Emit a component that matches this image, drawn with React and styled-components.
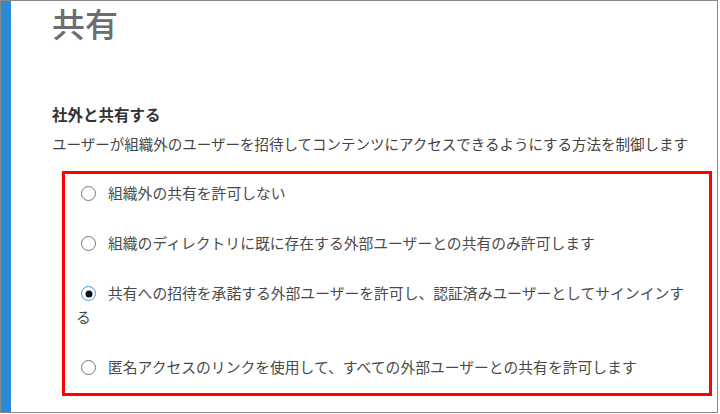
import React from "react";
import styled, { createGlobalStyle } from "styled-components";

const Global = createGlobalStyle`
  html, body { margin: 0; padding: 0; background: #ffffff; }
  body { font-family: "Noto Sans CJK JP", "Noto Sans", sans-serif; }
  * { box-sizing: border-box; }
`;

const Frame = styled.div`
  width: 718px;
  height: 413px;
  border: 1px solid #8a8a8a;
  display: flex;
  background: #fff;
`;

const Stripe = styled.div`
  width: 10px;
  flex: none;
  background: #2a8ad9;
`;

const Content = styled.main`
  flex: 1;
  padding: 0 4px 0 41px;
  display: flex;
  flex-direction: column;
`;

const Title = styled.h1`
  margin: 0;
  font-size: 33px;
  line-height: 44px;
  font-weight: 500;
  color: #6b6e70;
`;

const SectionHeading = styled.h2`
  margin: 57px 0 0;
  font-size: 15.5px;
  line-height: 24px;
  font-weight: 700;
  color: #333333;
`;

const Description = styled.p`
  margin: 7px 0 0;
  font-size: 14.5px;
  line-height: 22px;
  color: #444444;
  white-space: nowrap;
`;

const OptionBox = styled.div`
  margin: 16px 0 0 10px;
  width: 650px;
  border: 3px solid #ff0000;
  padding: 7px 14px 14px 11px;
  display: flex;
  flex-direction: column;
  gap: 26px;
`;

const OptionLabel = styled.label`
  display: block;
  font-size: 14.8px;
  line-height: 24px;
  color: #4a4a4a;
  cursor: pointer;
`;

const Radio = styled.input.attrs({ type: "radio" })`
  appearance: none;
  -webkit-appearance: none;
  display: inline-block;
  vertical-align: -2px;
  width: 15px;
  height: 15px;
  margin: 0 12px 0 5px;
  border-radius: 50%;
  border: 1px solid #777777;
  background: #fff;
  position: relative;

  &:checked {
    border: 1.5px solid #3d9be3;
  }
  &:checked::after {
    content: "";
    position: absolute;
    left: 50%;
    top: 50%;
    width: 7px;
    height: 7px;
    border-radius: 50%;
    background: #111;
    transform: translate(-50%, -50%);
  }
`;

const options = [
  "組織外の共有を許可しない",
  "組織のディレクトリに既に存在する外部ユーザーとの共有のみ許可します",
  "共有への招待を承諾する外部ユーザーを許可し、認証済みユーザーとしてサインインする",
  "匿名アクセスのリンクを使用して、すべての外部ユーザーとの共有を許可します",
];

export default function App() {
  return (
    <>
      <Global />
      <Frame>
        <Stripe />
        <Content>
          <Title>共有</Title>
          <SectionHeading>社外と共有する</SectionHeading>
          <Description>
            ユーザーが組織外のユーザーを招待してコンテンツにアクセスできるようにする方法を制御します
          </Description>
          <OptionBox>
            {options.map((text, i) => (
              <OptionLabel key={i}>
                <Radio name="sharing" defaultChecked={i === 2} />
                {text}
              </OptionLabel>
            ))}
          </OptionBox>
        </Content>
      </Frame>
    </>
  );
}
